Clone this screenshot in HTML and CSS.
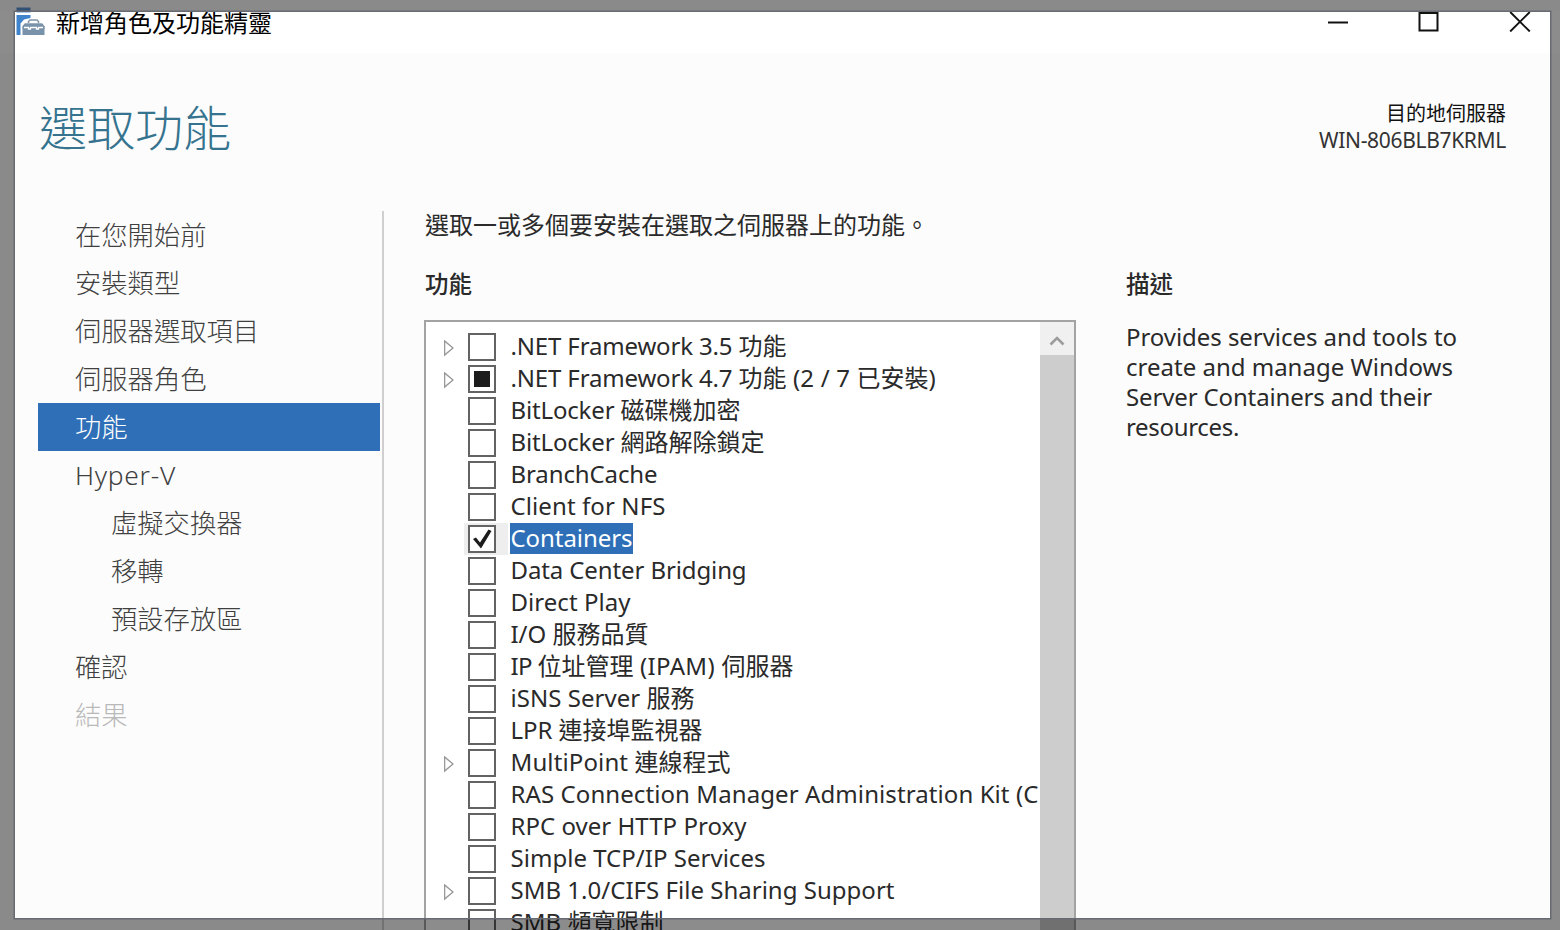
FILE: index.html
```html
<!DOCTYPE html>
<html lang="zh-Hant">
<head>
<meta charset="utf-8">
<title>新增角色及功能精靈</title>
<link rel="stylesheet" href="styles.css">
</head>
<body>
<div class="wizard">
  <header class="titlebar">
    <svg class="app-icon" width="30" height="30" viewBox="0 0 30 30">
      <path d="M0.500 0.500h14v5H0.500z" fill="#5b92d3"/>
      <path d="M0.500 8h14v3L8 12.500l-3.500 4V28h-4z" fill="#3e83cb"/>
      <path d="M6.500 28v-8.500l2-3h18l2 3V28z" fill="#7892aa"/>
      <path d="M12.500 16v-1.500l1.500-1.500h7l1.500 1.500V16" fill="none" stroke="#8096a8" stroke-width="1.500"/>
      <path d="M7 22V19l2-2h17l2 2v3" fill="none" stroke="#8096a8" stroke-width="1"/>
      <path d="M8 20.500h4.500v1.500h2v-1.500h6v1.500h2v-1.500H27" fill="none" stroke="#fff" stroke-width="1.300"/>
    </svg>
    <span class="app-name">新增角色及功能精靈</span>
    <div class="window-buttons">
      <svg width="22" height="22" viewBox="0 0 22 22"><path d="M1 12.500h20" stroke="#111" stroke-width="2"/></svg>
      <svg width="22" height="22" viewBox="0 0 22 22"><path d="M1.500 3h18v17.500h-18z" fill="none" stroke="#111" stroke-width="2"/></svg>
      <svg width="22" height="22" viewBox="0 0 22 22"><path d="M1.200 2 20.800 21.500M20.800 2 1.200 21.500" stroke="#111" stroke-width="1.900"/></svg>
    </div>
  </header>
  <section class="heading">
    <h1>選取功能</h1>
    <div class="server"><div>目的地伺服器</div><div class="host"><span class="fit" data-width="187">WIN-806BLB7KRML</span></div></div>
  </section>
  <main class="content">
    <nav class="steps">
      <div class="step">在您開始前</div>
      <div class="step">安裝類型</div>
      <div class="step">伺服器選取項目</div>
      <div class="step">伺服器角色</div>
      <div class="step current">功能</div>
      <div class="step"><span class="fit" data-width="101">Hyper-V</span></div>
      <div class="step sub">虛擬交換器</div>
      <div class="step sub">移轉</div>
      <div class="step sub">預設存放區</div>
      <div class="step">確認</div>
      <div class="step disabled">結果</div>
    </nav>
    <section class="features">
      <p class="intro">選取一或多個要安裝在選取之伺服器上的功能。</p>
      <h2>功能</h2>
      <div class="listbox">
        <div class="rows">
          <div class="row"><i class="arrow"></i><i class="box"></i><span class="label"><span class="fit" data-width="228">.NET Framework 3.5 </span>功能</span></div>
          <div class="row"><i class="arrow"></i><i class="box partial"></i><span class="label"><span class="fit" data-width="228">.NET Framework 4.7 </span>功能<span class="fit" data-width="70"> (2 / 7 </span>已安裝<span class="fit" data-width="7">)</span></span></div>
          <div class="row"><i class="box"></i><span class="label"><span class="fit" data-width="110">BitLocker </span>磁碟機加密</span></div>
          <div class="row"><i class="box"></i><span class="label"><span class="fit" data-width="110">BitLocker </span>網路解除鎖定</span></div>
          <div class="row"><i class="box"></i><span class="label"><span class="fit" data-width="147">BranchCache</span></span></div>
          <div class="row"><i class="box"></i><span class="label"><span class="fit" data-width="155">Client for NFS</span></span></div>
          <div class="row selected"><i class="box"><svg width="28" height="28" viewBox="0 0 28 28"><path d="m5 14 3-1.500 4 5L20.500 4.500 23.500 6 13 23.500z" fill="#1c1c1c"/></svg></i><span class="label"><span class="fit" data-width="122">Containers</span></span></div>
          <div class="row"><i class="box"></i><span class="label"><span class="fit" data-width="236">Data Center Bridging</span></span></div>
          <div class="row"><i class="box"></i><span class="label"><span class="fit" data-width="120">Direct Play</span></span></div>
          <div class="row"><i class="box"></i><span class="label"><span class="fit" data-width="42">I/O </span>服務品質</span></div>
          <div class="row"><i class="box"></i><span class="label"><span class="fit" data-width="27">IP </span>位址管理<span class="fit" data-width="88"> (IPAM) </span>伺服器</span></div>
          <div class="row"><i class="box"></i><span class="label"><span class="fit" data-width="136">iSNS Server </span>服務</span></div>
          <div class="row"><i class="box"></i><span class="label"><span class="fit" data-width="48">LPR </span>連接埠監視器</span></div>
          <div class="row"><i class="arrow"></i><i class="box"></i><span class="label"><span class="fit" data-width="124">MultiPoint </span>連線程式</span></div>
          <div class="row"><i class="box"></i><span class="label"><span class="fit" data-width="528">RAS Connection Manager Administration Kit (C</span></span></div>
          <div class="row"><i class="box"></i><span class="label"><span class="fit" data-width="236">RPC over HTTP Proxy</span></span></div>
          <div class="row"><i class="box"></i><span class="label"><span class="fit" data-width="255">Simple TCP/IP Services</span></span></div>
          <div class="row"><i class="arrow"></i><i class="box"></i><span class="label"><span class="fit" data-width="384">SMB 1.0/CIFS File Sharing Support</span></span></div>
          <div class="row"><i class="box"></i><span class="label"><span class="fit" data-width="57">SMB </span>頻寬限制</span></div>
        </div>
        <div class="scrollbar"><div class="scroll-up"><svg width="16" height="12" viewBox="0 0 16 12"><path d="m1.500 9.500 6.500-6.500 6.500 6.500" fill="none" stroke="#9c9c9c" stroke-width="2.600"/></svg></div></div>
      </div>
    </section>
    <aside class="description">
      <h2>描述</h2>
      <div class="line"><span class="fit" data-width="331">Provides services and tools to</span></div>
      <div class="line"><span class="fit" data-width="327">create and manage Windows</span></div>
      <div class="line"><span class="fit" data-width="306">Server Containers and their</span></div>
      <div class="line"><span class="fit" data-width="113">resources.</span></div>
    </aside>
  </main>
  <div class="capture-frame"></div>
</div>
<script src="fit.js"></script>
</body>
</html>
```
FILE: fit.js
```js
document.querySelectorAll('.fit').forEach(function (el) {
  var width = Number(el.dataset.width);
  var natural = el.getBoundingClientRect().width;
  el.style.letterSpacing = (width - natural) / el.textContent.length + 'px';
});
```
FILE: styles.css
```css
* { box-sizing: border-box; }
body {
  margin: 0;
  overflow: hidden;
  background: #fcfcfc;
  color: #2a2a2a;
  font-family: "Noto Sans", "Noto Sans CJK TC", sans-serif;
  font-size: 24px;
}
h1, h2, p { margin: 0; }
.wizard {
  position: relative;
  width: 1560px;
  height: 930px;
  overflow: hidden;
  display: flex;
  flex-direction: column;
}
.fit { white-space: pre; }
.titlebar {
  height: 53px;
  flex: none;
  background: linear-gradient(#fcfcfc 11px, #fff 11px);
  display: flex;
  align-items: flex-start;
  padding: 7px 29px 0 16px;
}
.app-icon { flex: none; }
.app-name {
  margin-left: 10px;
  line-height: 30px;
  color: #000;
  font-family: "Noto Sans CJK TC", sans-serif;
}
.window-buttons {
  margin-left: auto;
  padding-top: 3px;
  display: flex;
  gap: 69px;
}
.heading {
  height: 158px;
  flex: none;
  display: flex;
  justify-content: space-between;
  padding: 38px 54px 0 39px;
}
h1 {
  font: 300 48px/68px "Noto Sans CJK TC", sans-serif;
  color: #35738f;
}
.server {
  padding-top: 10px;
  font-size: 20px;
  line-height: 26px;
  text-align: right;
  color: #111;
}
.host { font-size: 21px; color: #333; }
.content {
  flex: 1;
  min-height: 0;
  display: flex;
}
.steps {
  width: 384px;
  flex: none;
  padding: 0 2px 0 38px;
  border-right: 2px solid #cfcfcf;
}
.step {
  height: 48px;
  padding-left: 37px;
  line-height: 49px;
  font-size: 26.300px;
  font-weight: 300;
  color: #404040;
}
.sub { padding-left: 73px; }
.current { background: #2e6fb7; color: #fff; }
.disabled { color: #b9b9b9; }
.features {
  width: 652px;
  margin-left: 40px;
  flex: none;
  display: flex;
  flex-direction: column;
}
.intro {
  height: 55px;
  flex: none;
  padding-left: 1px;
  line-height: 25px;
  font-family: "Noto Sans CJK TC", sans-serif;
}
h2 {
  height: 54px;
  flex: none;
  padding-left: 1px;
  font: 500 23.500px/35px "Noto Sans CJK TC", sans-serif;
}
.listbox {
  height: 660px;
  flex: none;
  border: 2px solid #a3a3a3;
  background: #fff;
  display: flex;
}
.rows {
  width: 614px;
  padding-top: 9px;
  overflow: hidden;
}
.row {
  height: 32px;
  display: flex;
  align-items: center;
  padding-left: 42px;
}
.arrow {
  width: 11px;
  height: 17px;
  margin: 2px 13px 0 -24px;
  background: #999;
  clip-path: polygon(evenodd, 0 0, 10px 50%, 0 100%, 0 0, 1.300px 3px, 1.300px 14px, 8px 50%, 1.300px 3px);
}
.box {
  width: 28px;
  height: 28px;
  flex: none;
  border: 2px solid #636363;
  background: #fff;
}
.box svg { display: block; margin: -2px; }
.partial { background: #1c1c1c; box-shadow: inset 0 0 0 4px #fff; }
.label {
  height: 31px;
  margin: 0 0 2px 14px;
  padding-left: 0.500px;
  line-height: 30px;
  white-space: pre;
}
.selected { background: linear-gradient(#eee, #eee) 38px 0 / 44px 32px no-repeat; }
.selected .label { background: #2e6fb7; color: #fff; }
.scrollbar { width: 34px; background: #cdcdcd; }
.scroll-up {
  height: 33px;
  background: #f0f0f0;
  display: flex;
  align-items: center;
  justify-content: center;
  padding-top: 4px;
}
.description { margin-left: 50px; padding-top: 55px; }
.description h2 { height: 55px; padding-left: 0; }
.line { height: 30px; line-height: 31px; white-space: nowrap; }
/* Capture selection: everything outside the frame is dimmed. */
.capture-frame {
  position: absolute;
  left: 15px;
  top: 12px;
  width: 1535px;
  height: 906px;
  box-shadow: 0 0 0 1.500px #686a73, 0 0 0 100px rgba(0, 0, 0, 0.45);
}
```
